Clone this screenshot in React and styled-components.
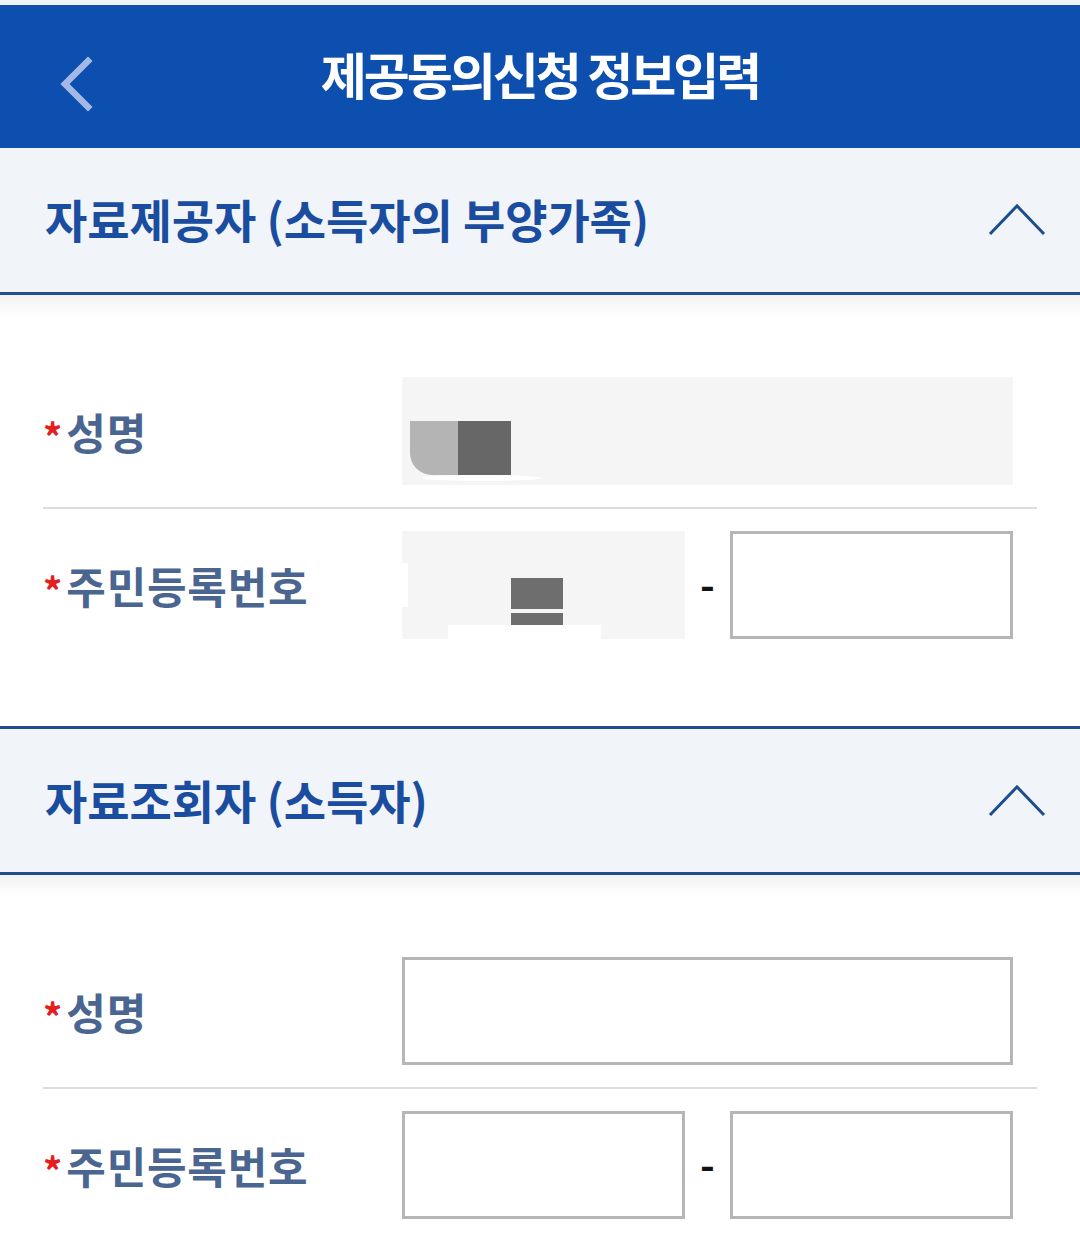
import React from "react";
import styled, { createGlobalStyle } from "styled-components";

const Global = createGlobalStyle`
  html, body { margin: 0; padding: 0; background: #ffffff; }
  body { font-family: "Noto Sans CJK KR", "Noto Sans", sans-serif; }
  * { box-sizing: border-box; }
`;

const Page = styled.div`
  width: 1080px;
  min-height: 1238px;
  background: #ffffff;
  border-top: 5px solid #eef3f7;
`;

const TopBar = styled.header`
  height: 143px;
  background: #0d4faf;
  display: flex;
  align-items: center;
  justify-content: center;
  position: relative;
`;

const BackButton = styled.button`
  position: absolute;
  left: 50px;
  top: 44px;
  width: 48px;
  height: 70px;
  border: 0;
  background: transparent;
  padding: 0;
  display: flex;
  align-items: center;
  justify-content: center;
`;

const TopTitle = styled.h1`
  margin: 0;
  color: #ffffff;
  font-size: 50px;
  font-weight: 700;
  letter-spacing: -3px;
  line-height: 1;
  padding: 0 0 8px 0;
`;

const SectionHead = styled.div`
  height: ${(p) => (p.$topBorder ? "149px" : "147px")};
  background: #f1f4f9;
  border-top: ${(p) => (p.$topBorder ? "3px solid #1f4d8e" : "none")};
  border-bottom: 3px solid #1f4d8e;
  display: flex;
  align-items: center;
  justify-content: space-between;
  padding: 0 34px 0 45px;
`;

const SectionTitle = styled.h2`
  margin: 0;
  color: #1a4da0;
  font-size: 46px;
  font-weight: 700;
  letter-spacing: -0.1px;
  line-height: 1;
  padding-bottom: 4px;
`;

const Content = styled.div`
  padding: 60px 43px 65px 43px;
  background: linear-gradient(#f2f2f2 0px, #ffffff 22px);
`;

const Row = styled.div`
  display: flex;
  align-items: center;
  padding: 22px 24px 22px 0;
  border-bottom: ${(p) => (p.$divider ? "2px solid #dcdddf" : "none")};
`;

const Label = styled.div`
  width: 359px;
  flex: none;
  display: flex;
  align-items: center;
  color: #4a6590;
  font-size: 43px;
  font-weight: 700;
  letter-spacing: 0.8px;
  line-height: 1;
`;

const Star = styled.span`
  color: #e3201e;
  font-size: 38px;
  font-weight: 700;
  margin: 10px 4px 0 0;
  letter-spacing: 0;
`;

const Fields = styled.div`
  flex: 1;
  display: grid;
  grid-template-columns: ${(p) => (p.$split ? "1fr 45px 1fr" : "1fr")};
  align-items: center;
`;

const Field = styled.div`
  height: 108px;
  position: relative;
  background: ${(p) => (p.$filled ? "#f5f5f5" : "#ffffff")};
  border: ${(p) => (p.$filled ? "none" : "3px solid #b5b6b8")};
`;

const Dash = styled.span`
  text-align: center;
  color: #111111;
  font-size: 40px;
  font-weight: 700;
  line-height: 1;
  padding-bottom: 4px;
`;

const Mask = styled.div`
  position: absolute;
  left: ${(p) => p.$x}px;
  top: ${(p) => p.$y}px;
  width: ${(p) => p.$w}px;
  height: ${(p) => p.$h}px;
  background: ${(p) => p.$c};
  border-radius: ${(p) => p.$r || "0"};
`;

const BackIcon = () => (
  <svg width="40" height="56" viewBox="0 0 40 56">
    <polyline
      points="34,5 11,28 34,51"
      fill="none"
      stroke="#a3b8e4"
      strokeWidth="6.5"
      strokeLinecap="square"
    />
  </svg>
);

const UpIcon = () => (
  <svg width="58" height="34" viewBox="0 0 58 34">
    <polyline
      points="2,31 29,3 56,31"
      fill="none"
      stroke="#1d4d91"
      strokeWidth="3"
    />
  </svg>
);

const Section = ({ title, topBorder, children }) => (
  <section>
    <SectionHead $topBorder={topBorder}>
      <SectionTitle>{title}</SectionTitle>
      <UpIcon />
    </SectionHead>
    <Content>{children}</Content>
  </section>
);

export default function App() {
  return (
    <Page>
      <Global />
      <TopBar>
        <BackButton aria-label="뒤로">
          <BackIcon />
        </BackButton>
        <TopTitle>제공동의신청 정보입력</TopTitle>
      </TopBar>

      <Section title="자료제공자 (소득자의 부양가족)">
        <Row $divider>
          <Label>
            <Star>*</Star>성명
          </Label>
          <Fields>
            <Field $filled>
              <Mask $x={8} $y={44} $w={50} $h={54} $c="#b4b4b4" $r="0 0 0 22px" />
              <Mask $x={56} $y={44} $w={53} $h={54} $c="#676767" />
              <Mask $x={20} $y={98} $w={120} $h={6} $c="#ffffff" $r="50%" />
            </Field>
          </Fields>
        </Row>
        <Row>
          <Label>
            <Star>*</Star>주민등록번호
          </Label>
          <Fields $split>
            <Field $filled>
              <Mask $x={109} $y={47} $w={52} $h={31} $c="#6e6e6e" />
              <Mask $x={109} $y={82} $w={52} $h={12} $c="#6e6e6e" />
              <Mask $x={46} $y={94} $w={153} $h={14} $c="#ffffff" />
              <Mask $x={0} $y={32} $w={6} $h={44} $c="#ffffff" />
            </Field>
            <Dash>-</Dash>
            <Field />
          </Fields>
        </Row>
      </Section>

      <Section title="자료조회자 (소득자)" topBorder>
        <Row $divider>
          <Label>
            <Star>*</Star>성명
          </Label>
          <Fields>
            <Field />
          </Fields>
        </Row>
        <Row>
          <Label>
            <Star>*</Star>주민등록번호
          </Label>
          <Fields $split>
            <Field />
            <Dash>-</Dash>
            <Field />
          </Fields>
        </Row>
      </Section>
    </Page>
  );
}
